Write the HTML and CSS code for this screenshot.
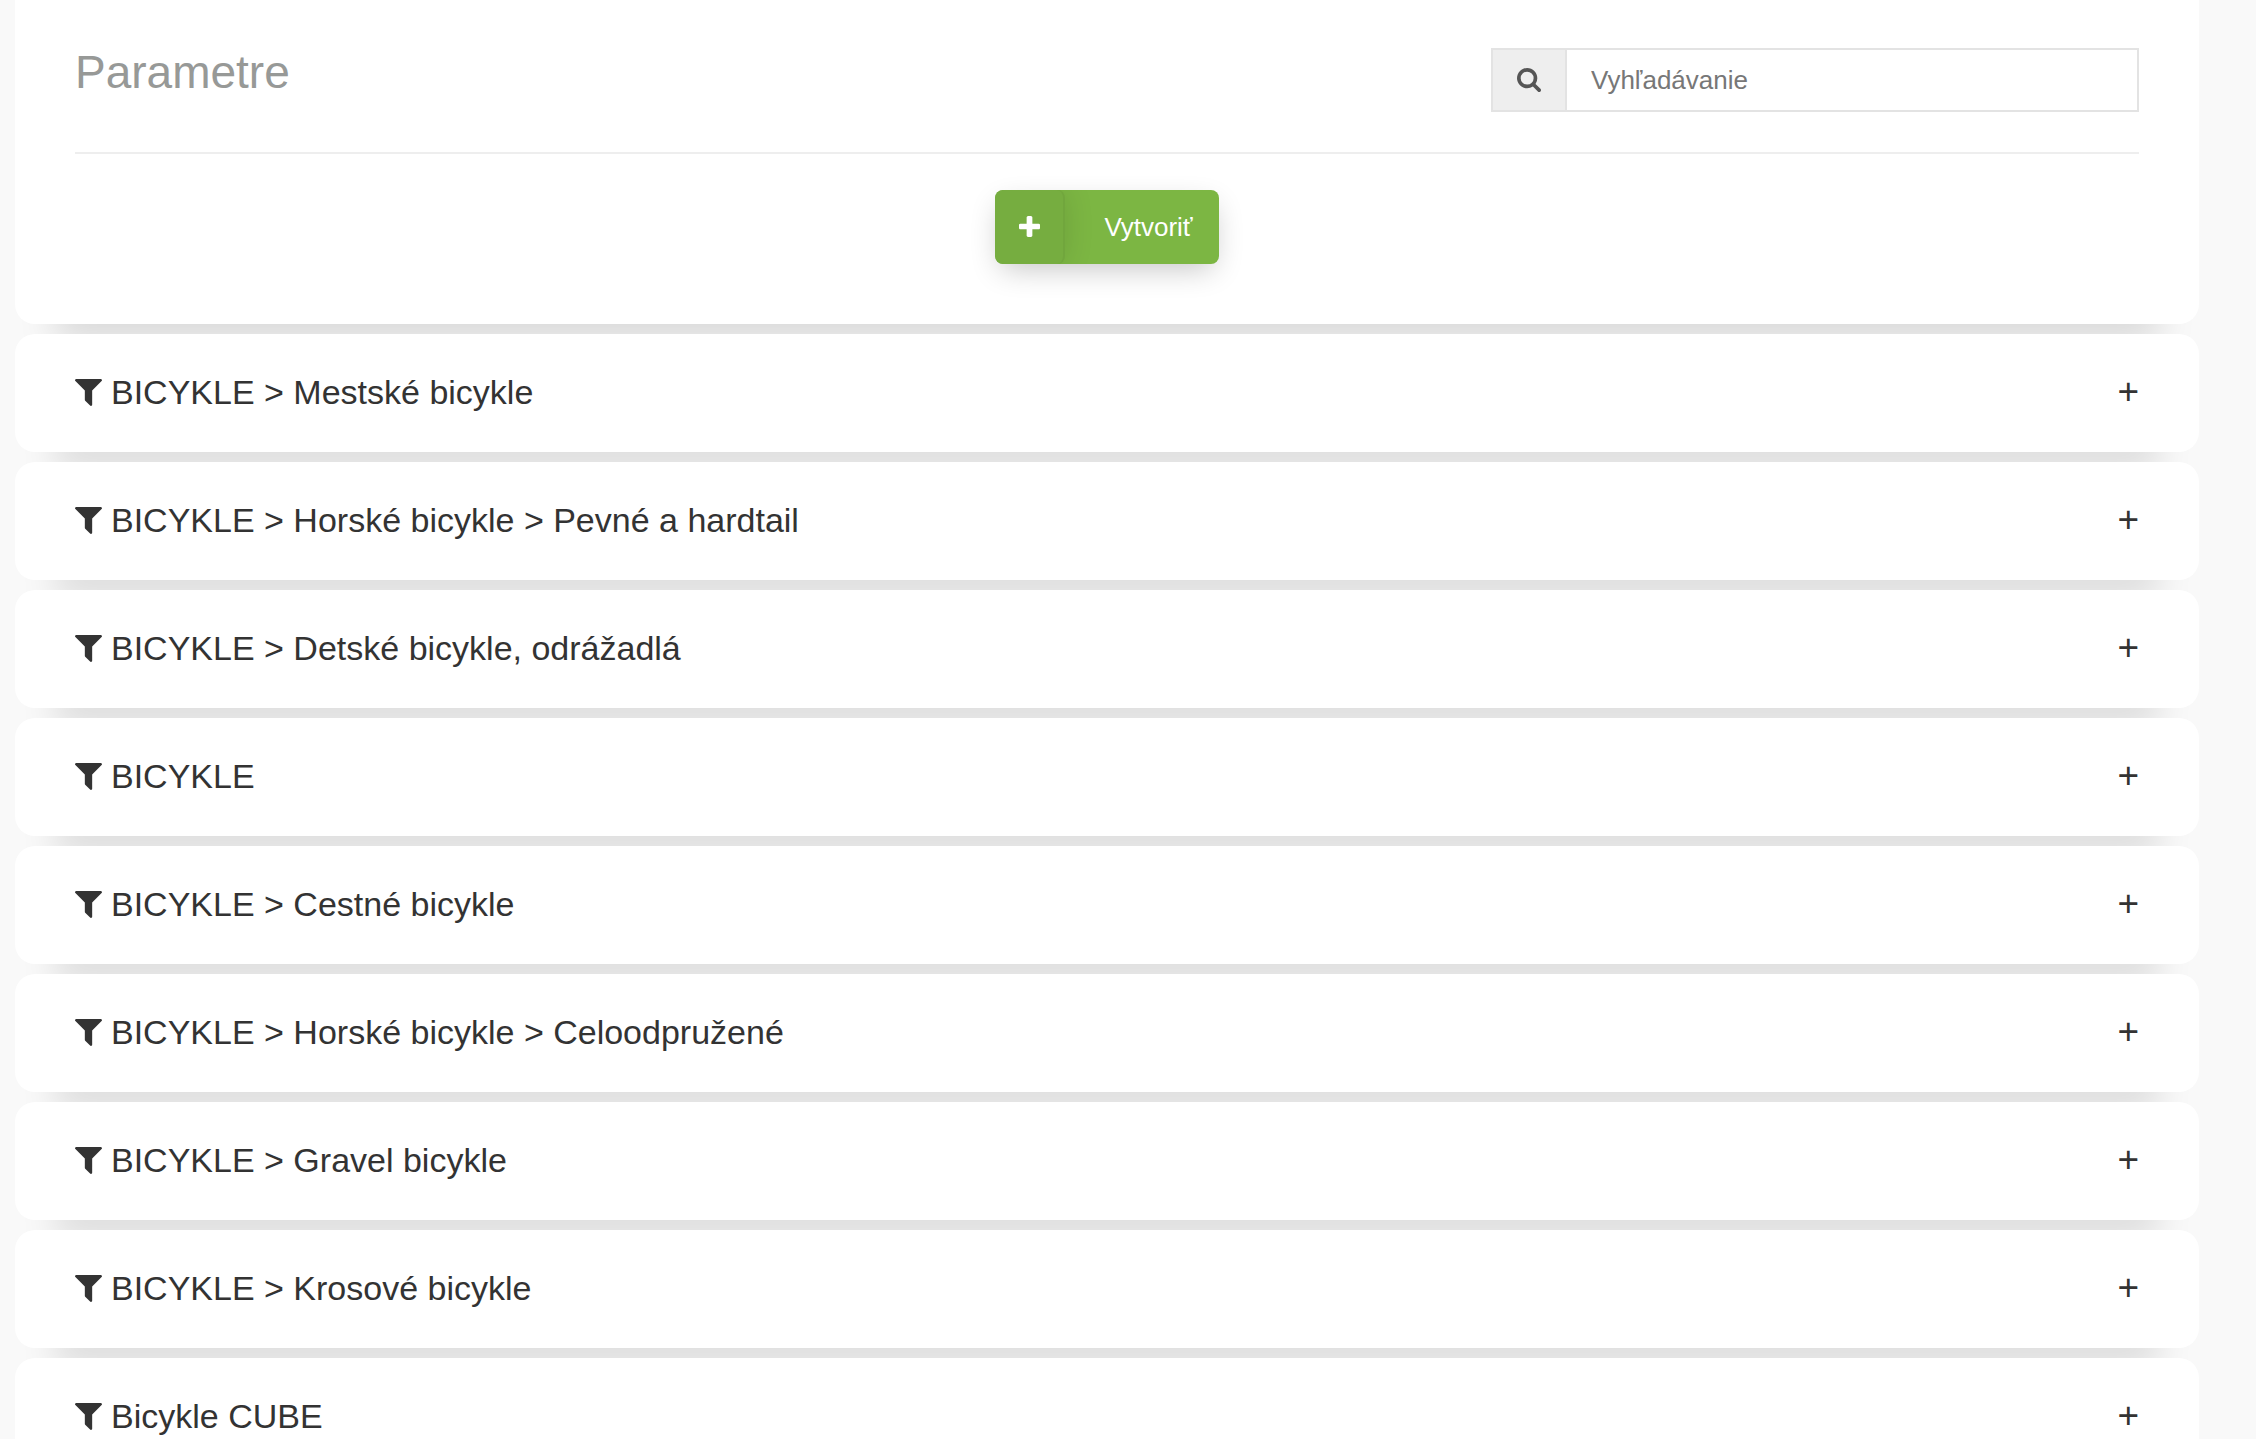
FILE: index.html
```html
<!DOCTYPE html>
<html lang="sk">
<head>
    <meta charset="UTF-8">
    <meta name="viewport" content="width=device-width, initial-scale=1.0">
    <title>Parametre</title>
    <link rel="stylesheet" href="styles.css">
</head>
<body>
    <!-- shared icons -->
    <svg class="sprite" aria-hidden="true">
        <symbol id="icon-filter" viewBox="190 256 1412 1408"><path d="M1595 295q17 41-14 70l-493 493v742q0 42-39 59-13 5-25 5-27 0-45-19l-256-256q-19-19-19-45v-486l-493-493q-31-29-14-70 17-39 59-39h1280q42 0 59 39z"/></symbol>
        <symbol id="icon-search" viewBox="64 128 1664 1664"><path d="M1216 832q0-185-131.5-316.5t-316.5-131.5-316.5 131.5-131.5 316.5 131.5 316.5 316.5 131.5 316.5-131.5 131.5-316.5zm512 832q0 52-38 90t-90 38q-54 0-90-38l-343-342q-179 124-399 124-143 0-273.5-55.5t-225-150-150-225-55.5-273.5 55.5-273.5 150-225 225-150 273.5-55.5 273.5 55.5 225 150 150 225 55.5 273.5q0 220-124 399l343 343q37 37 37 90z"/></symbol>
        <symbol id="icon-plus" viewBox="192 128 1408 1408"><path d="M1600 736v192q0 40-28 68t-68 28h-416v416q0 40-28 68t-68 28h-192q-40 0-68-28t-28-68v-416h-416q-40 0-68-28t-28-68v-192q0-40 28-68t68-28h416v-416q0-40 28-68t68-28h192q40 0 68 28t28 68v416h416q40 0 68 28t28 68z"/></symbol>
    </svg>

    <main class="content">
        <section class="card toolbar">
            <div class="toolbar-head">
                <h1>Parametre</h1>
                <div class="search">
                    <label class="search-icon" for="search" aria-label="Vyhľadávanie"><svg><use href="#icon-search"/></svg></label>
                    <input type="text" id="search" placeholder="Vyhľadávanie">
                </div>
            </div>
            <button type="button" class="create">
                <span class="create-icon"><svg><use href="#icon-plus"/></svg></span>
                <span class="create-label">Vytvoriť</span>
            </button>
        </section>

        <button type="button" class="card row">
            <svg><use href="#icon-filter"/></svg>
            <span class="name">BICYKLE &gt; Mestské bicykle</span>
            <span class="toggle">+</span>
        </button>
        <button type="button" class="card row">
            <svg><use href="#icon-filter"/></svg>
            <span class="name">BICYKLE &gt; Horské bicykle &gt; Pevné a hardtail</span>
            <span class="toggle">+</span>
        </button>
        <button type="button" class="card row">
            <svg><use href="#icon-filter"/></svg>
            <span class="name">BICYKLE &gt; Detské bicykle, odrážadlá</span>
            <span class="toggle">+</span>
        </button>
        <button type="button" class="card row">
            <svg><use href="#icon-filter"/></svg>
            <span class="name">BICYKLE</span>
            <span class="toggle">+</span>
        </button>
        <button type="button" class="card row">
            <svg><use href="#icon-filter"/></svg>
            <span class="name">BICYKLE &gt; Cestné bicykle</span>
            <span class="toggle">+</span>
        </button>
        <button type="button" class="card row">
            <svg><use href="#icon-filter"/></svg>
            <span class="name">BICYKLE &gt; Horské bicykle &gt; Celoodpružené</span>
            <span class="toggle">+</span>
        </button>
        <button type="button" class="card row">
            <svg><use href="#icon-filter"/></svg>
            <span class="name">BICYKLE &gt; Gravel bicykle</span>
            <span class="toggle">+</span>
        </button>
        <button type="button" class="card row">
            <svg><use href="#icon-filter"/></svg>
            <span class="name">BICYKLE &gt; Krosové bicykle</span>
            <span class="toggle">+</span>
        </button>
        <button type="button" class="card row">
            <svg><use href="#icon-filter"/></svg>
            <span class="name">Bicykle CUBE</span>
            <span class="toggle">+</span>
        </button>
    </main>
</body>
</html>
```
FILE: styles.css
```css
* { box-sizing: border-box; }
body { margin: 0; background: #f9f9f9; color: #333; font-family: "Liberation Sans", Arial, sans-serif; }
button, input { font-family: inherit; }
svg { display: block; flex: none; fill: currentColor; }
.sprite { display: none; }

.content { display: flex; flex-direction: column; gap: 10px; margin: 0 57px 0 15px; }
.card { position: relative; background: white; border: none; border-radius: 20px; box-shadow: 0 57px 35px -40px rgba(0, 0, 0, 0.13); }

.toolbar { padding: 48px 60px 60px; border-radius: 0 0 20px 20px; }
.toolbar-head { display: flex; justify-content: space-between; align-items: flex-start; padding-bottom: 40px; border-bottom: 2px solid #eee; }
h1 { margin: 0; font-size: 46px; line-height: 48px; font-weight: normal; color: #979997; }

.search { display: flex; width: 648px; height: 64px; border: 2px solid #e3e3e3; }
.search-icon { display: flex; align-items: center; justify-content: center; width: 74px; background: #eee; border-right: 2px solid #e3e3e3; color: #555; }
.search-icon svg { width: 24px; height: 24px; }
.search input { flex: 1; min-width: 0; padding: 0 24px; border: none; outline: none; background: white; font-size: 26px; color: #555; }
.search input::placeholder { color: #777; }

.create { display: flex; margin: 36px auto 0; height: 74px; padding: 0; border: none; border-radius: 8px; overflow: hidden; background: #7cb643; color: white; font-size: 26px; cursor: pointer; box-shadow: 0 10px 30px -6px rgba(0, 0, 0, 0.24); }
.create-icon { display: flex; align-items: center; justify-content: center; width: 70px; height: 74px; padding-bottom: 2px; border-right: 2px solid #71a63d; border-radius: 8px; background: #76ad40; box-shadow: 0 0 30px rgba(0, 0, 0, 0.12); }
.create-icon svg { width: 21px; height: 21px; }
.create-label { padding: 0 26px 0 39px; line-height: 74px; }

.row { display: flex; align-items: center; gap: 9px; width: 100%; height: 118px; padding: 0 60px 2px; color: #333; font-size: 34px; text-align: left; cursor: pointer; }
.row svg { width: 27px; height: 27px; }
.name { flex: 1; }
.toggle { font-size: 37px; }
```
